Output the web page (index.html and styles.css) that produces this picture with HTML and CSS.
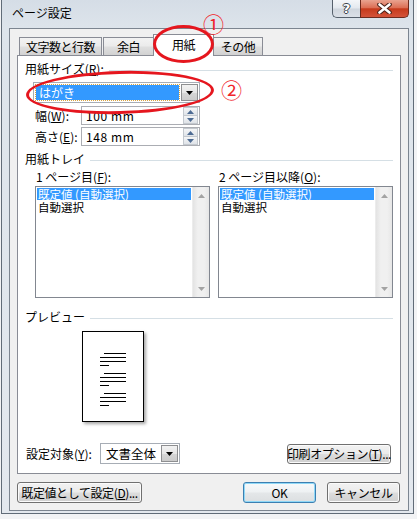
FILE: index.html
```html
<!DOCTYPE html>
<html lang="ja">
<head>
<meta charset="utf-8">
<title>ページ設定</title>
<link rel="stylesheet" href="styles.css">
</head>
<body>
<div class="window">
  <div class="titlebar">
    <span class="title">ページ設定</span>
    <div class="caption">
      <div class="cap help"><span class="help-glyph">?</span></div>
      <div class="cap close">
        <svg width="15" height="11" viewBox="0 0 15 11"><path d="M2.5 1.5 L12.5 9.5 M12.5 1.5 L2.5 9.5" stroke="#4a2219" stroke-width="4.6" stroke-linecap="round" fill="none"/><path d="M2.5 1.5 L12.5 9.5 M12.5 1.5 L2.5 9.5" stroke="#ffffff" stroke-width="2.6" stroke-linecap="round" fill="none"/></svg>
      </div>
    </div>
  </div>
  <div class="client">
    <div class="tabs">
      <div class="tab tab-1">文字数と行数</div>
      <div class="tab tab-2">余白</div>
      <div class="tab tab-active">用紙</div>
      <div class="tab tab-4">その他</div>
    </div>
    <div class="panel">
      <div class="ghead"><span>用紙サイズ(<u>R</u>):</span><i class="rule"></i></div>
      <div class="combo size-combo">
        <div class="combo-value"><span class="hl">はがき</span></div>
        <div class="drop"><svg width="7" height="4" viewBox="0 0 7 4"><path d="M0 0 H7 L3.5 4 Z" fill="#000"/></svg></div>
      </div>
      <div class="frow frow-w">
        <span class="flabel">幅(<u>W</u>):</span>
        <div class="spin">
          <span class="spin-val">100 mm</span>
          <div class="spin-btns">
            <div class="sb"><svg width="7" height="4" viewBox="0 0 7 4"><path d="M0 4 H7 L3.5 0 Z" fill="#4d6b93"/></svg></div>
            <div class="sb"><svg width="7" height="4" viewBox="0 0 7 4"><path d="M0 0 H7 L3.5 4 Z" fill="#4d6b93"/></svg></div>
          </div>
        </div>
      </div>
      <div class="frow frow-h">
        <span class="flabel">高さ(<u>E</u>):</span>
        <div class="spin">
          <span class="spin-val">148 mm</span>
          <div class="spin-btns">
            <div class="sb"><svg width="7" height="4" viewBox="0 0 7 4"><path d="M0 4 H7 L3.5 0 Z" fill="#4d6b93"/></svg></div>
            <div class="sb"><svg width="7" height="4" viewBox="0 0 7 4"><path d="M0 0 H7 L3.5 4 Z" fill="#4d6b93"/></svg></div>
          </div>
        </div>
      </div>
      <div class="ghead ghead-tray"><span>用紙トレイ</span><i class="rule"></i></div>
      <div class="trays">
        <div class="tray">
          <div class="tray-label">1 ページ目(<u>F</u>):</div>
          <div class="listbox">
            <div class="items">
              <div class="item sel">既定値 (自動選択)</div>
              <div class="item">自動選択</div>
            </div>
            <div class="vscroll">
              <div class="arrow"><svg width="7" height="4" viewBox="0 0 7 4"><path d="M0 4 H7 L3.5 0 Z" fill="#a3a3a3"/></svg></div>
              <div class="arrow"><svg width="7" height="4" viewBox="0 0 7 4"><path d="M0 0 H7 L3.5 4 Z" fill="#a3a3a3"/></svg></div>
            </div>
          </div>
        </div>
        <div class="tray">
          <div class="tray-label">2 ページ目以降(<u>O</u>):</div>
          <div class="listbox">
            <div class="items">
              <div class="item sel">既定値 (自動選択)</div>
              <div class="item">自動選択</div>
            </div>
            <div class="vscroll">
              <div class="arrow"><svg width="7" height="4" viewBox="0 0 7 4"><path d="M0 4 H7 L3.5 0 Z" fill="#a3a3a3"/></svg></div>
              <div class="arrow"><svg width="7" height="4" viewBox="0 0 7 4"><path d="M0 0 H7 L3.5 4 Z" fill="#a3a3a3"/></svg></div>
            </div>
          </div>
        </div>
      </div>
      <div class="ghead ghead-preview"><span>プレビュー</span><i class="rule"></i></div>
      <div class="preview-page">
        <div class="para"><i class="ln a"></i><i class="ln b"></i><i class="ln b"></i><i class="ln c"></i></div>
        <div class="para"><i class="ln a"></i><i class="ln b"></i><i class="ln b"></i><i class="ln c"></i></div>
        <div class="para"><i class="ln a"></i><i class="ln b"></i><i class="ln b"></i><i class="ln c"></i></div>
      </div>
      <div class="apply">
        <span class="apply-label">設定対象(<u>Y</u>):</span>
        <div class="combo small-combo">
          <div class="combo-value"><span class="plain">文書全体</span></div>
          <div class="drop"><svg width="7" height="4" viewBox="0 0 7 4"><path d="M0 0 H7 L3.5 4 Z" fill="#000"/></svg></div>
        </div>
        <div class="btn btn-print">印刷オプション(<u>T</u>)...</div>
      </div>
    </div>
    <div class="dialog-buttons">
      <div class="btn btn-setdefault">既定値として設定(<u>D</u>)...</div>
      <div class="btn btn-ok">OK</div>
      <div class="btn btn-cancel">キャンセル</div>
    </div>
  </div>
</div>
<div class="mark mark-ellipse-1"></div>
<div class="mark mark-ellipse-2"></div>
<span class="mark mark-num mark-num-1">①</span>
<span class="mark mark-num mark-num-2">②</span>
</body>
</html>
```

FILE: styles.css
```css
* { box-sizing: border-box; }
html, body { margin: 0; padding: 0; }
body {
  width: 417px;
  height: 519px;
  overflow: hidden;
  position: relative;
  background: #f2f3f5;
  font-family: "Noto Sans CJK JP", "Noto Sans", sans-serif;
  font-size: 12px;
  color: #000;
}
u { text-decoration: underline; text-underline-offset: 1px; }

.window {
  margin-left: 1px;
  width: 413px;
  height: 514px;
  border: 1px solid #616c78;
  border-top: none;
  padding: 0 4px 0 7px;
  background: linear-gradient(180deg, #d5dde6 0, #dde4eb 28px, #e3e8ee 100%);
  display: flex;
  flex-direction: column;
}

.titlebar {
  height: 28px;
  display: flex;
  justify-content: space-between;
  align-items: flex-start;
}
.title {
  padding-left: 3px;
  margin-top: 5px;
  line-height: 15px;
  font-size: 12px;
  color: #000;
}
.caption { display: flex; }
.cap {
  height: 18px;
  display: flex;
  align-items: center;
  justify-content: center;
  border: 1px solid #56606c;
  border-top: none;
}
.help {
  width: 28px;
  border-right: none;
  border-radius: 0 0 0 5px;
  background: linear-gradient(180deg, #f4f6f9 0, #e3e8ee 48%, #cfd5dd 52%, #dbe0e7 100%);
}
.help-glyph {
  font-family: "DejaVu Sans", sans-serif;
  font-weight: bold;
  font-size: 13px;
  line-height: 13px;
  color: #fff;
  text-shadow: -1px 0 #3b4049, 1px 0 #3b4049, 0 -1px #3b4049, 0 1px #3b4049;
}
.close {
  width: 49px;
  border-color: #6e2a1d;
  border-radius: 0 0 5px 0;
  background: linear-gradient(180deg, #e9a390 0, #dc6f55 45%, #c63a1c 52%, #d4533a 100%);
}

.client {
  width: 400px;
  height: 483px;
  border: 1px solid #7c8590;
  background: #f0f0f0;
  padding: 5px 7px 7px;
  display: flex;
  flex-direction: column;
}

.tabs {
  height: 21px;
  display: flex;
  align-items: flex-end;
  padding-left: 2px;
  position: relative;
  z-index: 1;
}
.tab {
  height: 18px;
  border: 1px solid #898c95;
  border-bottom: none;
  background: linear-gradient(180deg, #f3f3f3 0, #ebebeb 48%, #dfdfdf 52%, #d2d2d2 100%);
  display: flex;
  align-items: center;
  justify-content: center;
  line-height: 14px;
  font-size: 12px;
  letter-spacing: -0.5px;
}
.tab-1 { width: 83px; }
.tab-2 { width: 51px; margin-left: 1px; }
.tab-active {
  width: 61px;
  height: 22px;
  margin-left: -1px;
  margin-bottom: -1px;
  background: #fff;
  position: relative;
  z-index: 2;
  padding-bottom: 1px;
}
.tab-4 { width: 50px; margin-left: -1px; }

.panel {
  height: 419px;
  background: #fff;
  border: 1px solid #898c95;
  padding: 6px 7px 0;
  display: flex;
  flex-direction: column;
}

.ghead {
  display: flex;
  align-items: center;
  gap: 5px;
  height: 14px;
  line-height: 14px;
  white-space: nowrap;
}
.ghead .rule {
  flex: 1;
  height: 1px;
  background: #d5dfe5;
  margin-top: 2px;
}
.ghead-tray { margin-top: 6px; }
.ghead-preview { margin-top: 12px; }

.combo {
  height: 21px;
  border: 1px solid #a7adb5;
  background: #fff;
  display: flex;
  align-items: stretch;
  padding: 1px;
}
.combo-value {
  flex: 1;
  display: flex;
  align-items: center;
  padding: 1px;
}
.size-combo { width: 167px; margin: 6px 0 0 8px; }
.hl {
  flex: 1;
  height: 15px;
  line-height: 15px;
  background: #3399ff;
  color: #fff;
  padding-left: 3px;
  outline: 1px dotted #d9a441;
  margin-right: 1px;
}
.drop {
  width: 17px;
  display: flex;
  align-items: center;
  justify-content: center;
  border: 1px solid #8e8f91;
  background: linear-gradient(180deg, #f2f2f2 0, #e6e6e6 50%, #d6d6d6 51%, #cbcbcb 100%);
}

.frow {
  display: flex;
  align-items: center;
  margin-left: 10px;
  height: 19px;
}
.frow-w { margin-top: 3px; }
.frow-h { margin-top: 2px; }
.flabel { width: 46px; line-height: 14px; }
.spin {
  width: 119px;
  height: 19px;
  border: 1px solid #abadb3;
  background: #fff;
  display: flex;
  align-items: center;
  justify-content: space-between;
  padding: 0 1px 0 4px;
}
.spin-val { line-height: 14px; letter-spacing: 0.6px; }
.spin-btns {
  width: 15px;
  height: 17px;
  display: flex;
  flex-direction: column;
}
.sb {
  flex: 1;
  display: flex;
  align-items: center;
  justify-content: center;
  border: 1px solid #c3c8ce;
  background: linear-gradient(180deg, #f5f6f7, #dfe3e8);
}
.sb + .sb { border-top: none; }

.trays {
  display: flex;
  gap: 8px;
  margin: 4px 0 0 10px;
}
.tray { width: 175px; display: flex; flex-direction: column; }
.tray-label {
  height: 14px;
  line-height: 14px;
  padding-left: 1px;
  margin-bottom: 2px;
  white-space: nowrap;
}
.listbox {
  height: 112px;
  border: 1px solid #828790;
  background: #fff;
  display: flex;
}
.items {
  flex: 1;
  padding: 1px;
  display: flex;
  flex-direction: column;
  gap: 1px;
}
.item {
  height: 12px;
  line-height: 12px;
  font-size: 11.5px;
  padding-left: 1px;
  white-space: nowrap;
}
.item.sel { background: #3399ff; color: #fff; }
.vscroll {
  width: 17px;
  background: linear-gradient(90deg, #e3e3e3 0, #f0f0f0 30%, #f0f0f0 70%, #e6e6e6 100%);
  border-left: 1px solid #ececec;
  display: flex;
  flex-direction: column;
  justify-content: space-between;
}
.arrow {
  height: 17px;
  display: flex;
  align-items: center;
  justify-content: center;
}

.preview-page {
  width: 62px;
  height: 91px;
  margin: 7px 0 0 57px;
  border: 1px solid #000;
  background: #fff;
  box-shadow: 2px 2px 3px rgba(0, 0, 0, 0.35);
  padding: 21px 0 0 17px;
  display: flex;
  flex-direction: column;
  gap: 7px;
}
.para { display: flex; flex-direction: column; gap: 3px; }
.ln { display: block; height: 1px; background: #000; }
.ln.a { margin-left: 4px; width: 22px; }
.ln.b { width: 26px; }
.ln.c { width: 9px; }

.apply {
  margin-top: 21px;
  height: 21px;
  display: flex;
  align-items: center;
  padding: 0 2px 0 1px;
}
.apply-label { width: 74px; line-height: 14px; white-space: nowrap; }
.small-combo { width: 80px; }
.plain { padding-left: 3px; line-height: 15px; font-size: 12.5px; }

.btn {
  height: 21px;
  border: 1px solid #707070;
  border-radius: 3px;
  background: linear-gradient(180deg, #f2f2f2 0, #ebebeb 48%, #dddddd 52%, #cfcfcf 100%);
  box-shadow: inset 0 0 0 1px #fbfbfb;
  display: flex;
  align-items: center;
  justify-content: center;
  line-height: 14px;
  white-space: nowrap;
  font-size: 12px;
  letter-spacing: -0.4px;
}
.btn-print { margin-left: auto; width: 104px; height: 20px; }

.dialog-buttons {
  margin-top: 8px;
  display: flex;
  padding-right: 1px;
}
.btn-setdefault { width: 125px; }
.btn-ok {
  width: 73px;
  margin-left: auto;
  border-color: #3c7fb1;
  box-shadow: inset 0 0 0 1px #8fd8f7;
  background: linear-gradient(180deg, #f7f9fa 0, #eef1f3 48%, #e4e7e9 52%, #dcdfe1 100%);
}
.btn-cancel { width: 73px; margin-left: 11px; }

.mark { position: absolute; z-index: 10; pointer-events: none; }
.mark-ellipse-1 {
  left: 153px;
  top: 25px;
  width: 61px;
  height: 38px;
  border: 3px solid #e5161e;
  border-radius: 50%;
}
.mark-ellipse-2 {
  left: 26px;
  top: 71px;
  width: 188px;
  height: 43px;
  border: 3px solid #e5161e;
  border-radius: 50%;
  transform: rotate(-1.5deg);
}
.mark-num {
  font-family: "Noto Sans CJK JP", sans-serif;
  font-size: 21px;
  line-height: 21px;
  color: #f0242a;
}
.mark-num-1 { left: 203px; top: 13px; }
.mark-num-2 { left: 221px; top: 79px; }
```
